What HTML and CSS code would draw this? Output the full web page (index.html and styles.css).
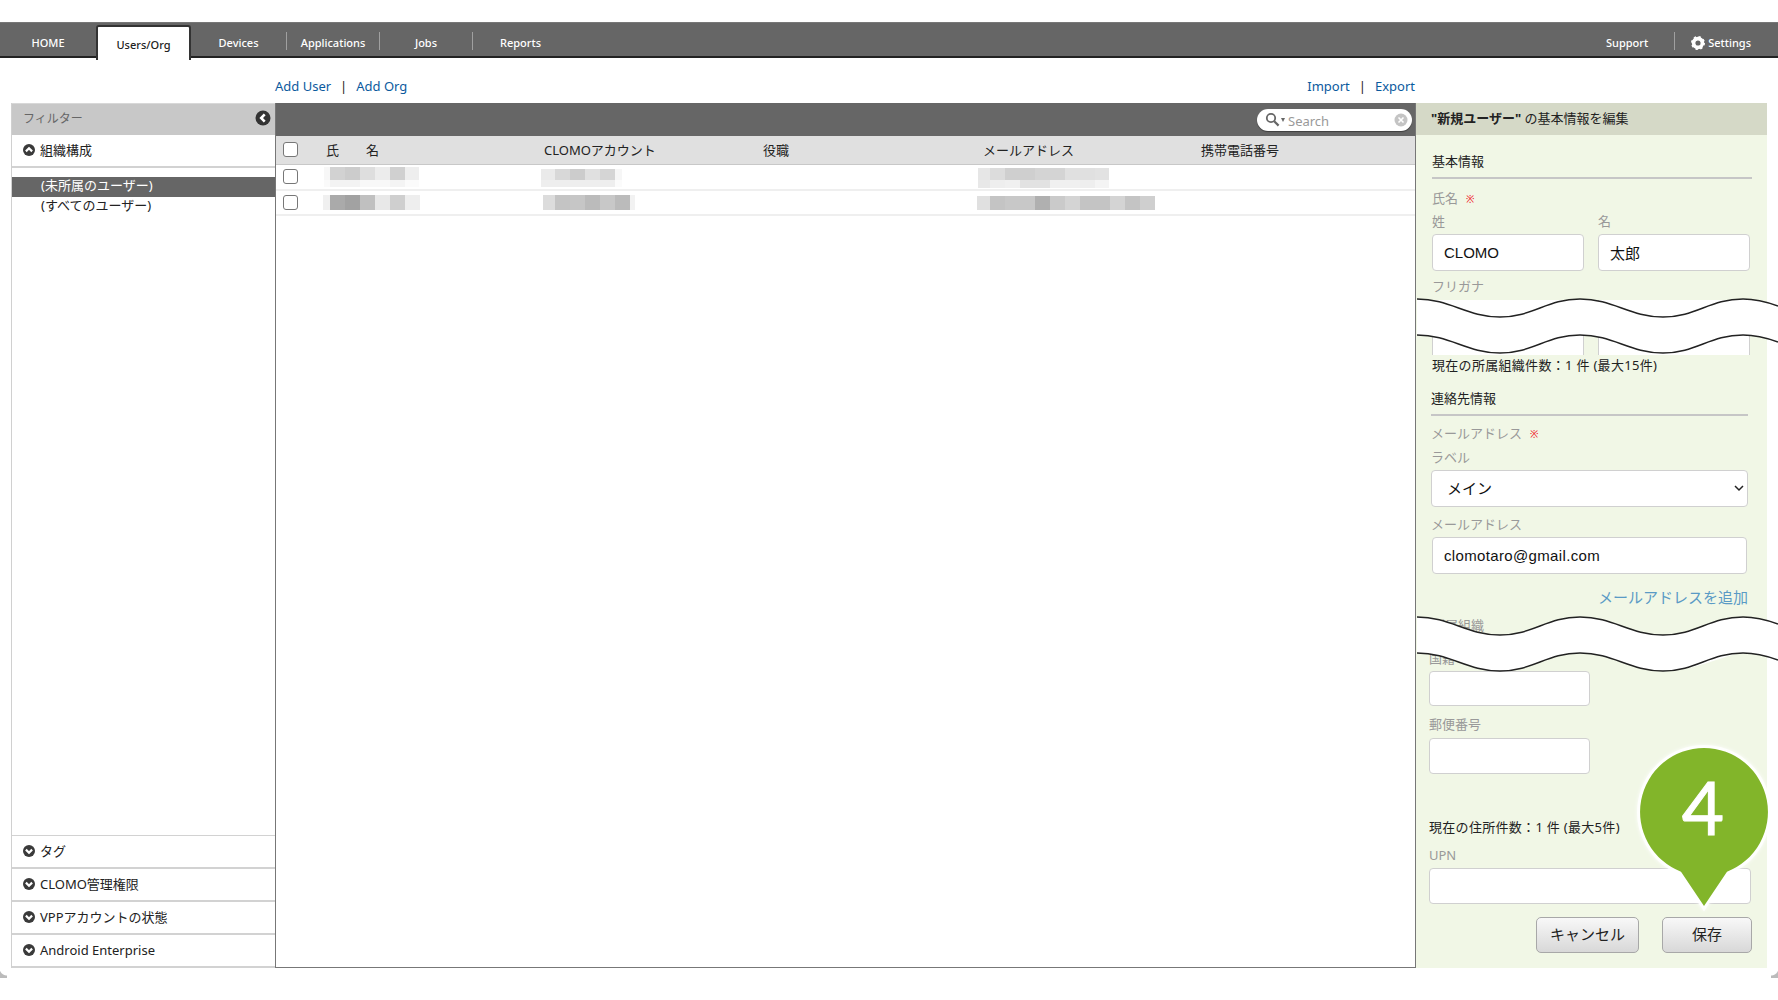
FILE: index.html
```html
<!DOCTYPE html>
<html lang="ja">
<head>
    <meta charset="UTF-8">
    <meta name="viewport" content="width=device-width, initial-scale=1.0">
    <title>Users/Org</title>
    <link rel="stylesheet" href="styles.css">
</head>
<body>
    <svg class="icon-defs" width="0" height="0">
        <defs>
            <symbol id="chev-down" viewBox="0 0 14 14">
                <circle cx="7" cy="7" r="6" fill="#3a3a3a"/>
                <path d="M3.9 5.6 7 8.7l3.1-3.1" fill="none" stroke="#fff" stroke-width="2.2"/>
            </symbol>
            <symbol id="chev-up" viewBox="0 0 14 14">
                <circle cx="7" cy="7" r="6" fill="#3a3a3a"/>
                <path d="M3.9 8.4 7 5.3l3.1 3.1" fill="none" stroke="#fff" stroke-width="2.2"/>
            </symbol>
        </defs>
    </svg>

    <nav class="nav">
        <a class="nav-item home">HOME</a>
        <a class="nav-item active">Users/Org</a>
        <a class="nav-item">Devices</a>
        <span class="nav-sep"></span>
        <a class="nav-item narrow">Applications</a>
        <span class="nav-sep"></span>
        <a class="nav-item narrow">Jobs</a>
        <span class="nav-sep"></span>
        <a class="nav-item">Reports</a>
        <a class="nav-support">Support</a>
        <span class="nav-sep"></span>
        <a class="nav-settings">
            <svg width="14" height="14" viewBox="0 0 14 14">
                <circle cx="7" cy="7" r="4.4" fill="none" stroke="#fff" stroke-width="3.6"/>
                <circle cx="7" cy="7" r="5" fill="none" stroke="#fff" stroke-width="4" stroke-dasharray="1.9 2"/>
            </svg>
            Settings
        </a>
    </nav>

    <div class="toolbar">
        <div class="toolbar-links">
            <a>Add User</a><span class="bar">|</span><a>Add Org</a>
        </div>
        <div class="toolbar-links">
            <a>Import</a><span class="bar">|</span><a>Export</a>
        </div>
    </div>

    <main class="main">
        <aside class="filter">
            <div class="filter-head">
                <span>フィルター</span>
                <svg class="collapse" width="16" height="16" viewBox="0 0 16 16">
                    <circle cx="8" cy="8" r="7.5" fill="#333"/>
                    <path d="M9.7 4.4 6.2 8l3.5 3.6" fill="none" stroke="#fff" stroke-width="2.6"/>
                </svg>
            </div>
            <div class="filter-row open">
                <svg width="14" height="14"><use href="#chev-up"/></svg>組織構成
            </div>
            <ul class="org-list">
                <li class="selected">(未所属のユーザー)</li>
                <li>(すべてのユーザー)</li>
            </ul>
            <div class="filter-row">
                <svg width="14" height="14"><use href="#chev-down"/></svg>タグ
            </div>
            <div class="filter-row">
                <svg width="14" height="14"><use href="#chev-down"/></svg>CLOMO管理権限
            </div>
            <div class="filter-row">
                <svg width="14" height="14"><use href="#chev-down"/></svg>VPPアカウントの状態
            </div>
            <div class="filter-row">
                <svg width="14" height="14"><use href="#chev-down"/></svg>Android Enterprise
            </div>
        </aside>

        <section class="list">
            <div class="list-head">
                <div class="search">
                    <svg width="15" height="15" viewBox="0 0 15 15">
                        <circle cx="6" cy="6" r="4.2" fill="none" stroke="#666" stroke-width="1.8"/>
                        <path d="m9.2 9.2 4.4 4.4" stroke="#666" stroke-width="2.2"/>
                    </svg>
                    <span class="search-caret"></span>
                    <span class="search-text">Search</span>
                    <svg class="search-clear" width="14" height="14" viewBox="0 0 14 14">
                        <circle cx="7" cy="7" r="6.5" fill="#c4c4c4"/>
                        <path d="m4.5 4.5 5 5m0-5-5 5" stroke="#fff" stroke-width="1.6"/>
                    </svg>
                </div>
            </div>
            <table class="users">
                <colgroup>
                    <col class="col-check">
                    <col class="col-name">
                    <col class="col-account">
                    <col class="col-title">
                    <col class="col-mail">
                    <col>
                </colgroup>
                <thead>
                    <tr>
                        <th><input type="checkbox"></th>
                        <th>氏<span class="name-gap"></span>名</th>
                        <th>CLOMOアカウント</th>
                        <th>役職</th>
                        <th>メールアドレス</th>
                        <th>携帯電話番号</th>
                    </tr>
                </thead>
                <tbody>
                    <tr class="row-one">
                        <td><input type="checkbox"></td>
                        <td><div class="name-a"></div></td>
                        <td><div class="account-a"></div></td>
                        <td></td>
                        <td><div class="mail-a"></div></td>
                        <td></td>
                    </tr>
                    <tr class="row-two">
                        <td><input type="checkbox"></td>
                        <td><div class="name-b"></div></td>
                        <td><div class="account-b"></div></td>
                        <td></td>
                        <td><div class="mail-b"></div></td>
                        <td></td>
                    </tr>
                </tbody>
            </table>
        </section>

        <aside class="editor">
            <div class="editor-head"><b>"新規ユーザー"</b> の基本情報を編集</div>

            <div class="part-upper">
                <h2 class="section-title first">基本情報</h2>
                <div class="label name-label">氏名<span class="req">※</span></div>
                <div class="name-grid">
                    <div>
                        <div class="label sub">姓</div>
                        <input class="text-input" type="text" value="CLOMO">
                    </div>
                    <div>
                        <div class="label sub">名</div>
                        <input class="text-input" type="text" value="太郎">
                    </div>
                </div>
                <div class="label kana">フリガナ</div>
                <div class="name-grid cut">
                    <div class="cut-input"></div>
                    <div class="cut-input"></div>
                </div>
                <div class="count first-count">現在の所属組織件数：1 件 (最大15件)</div>
                <h2 class="section-title contact">連絡先情報</h2>
                <div class="label mail-label">メールアドレス<span class="req">※</span></div>
                <div class="label sub-label">ラベル</div>
                <div class="select-wrap">
                    <select class="select-input"><option>メイン</option></select>
                    <svg class="select-chevron" width="10" height="7" viewBox="0 0 10 7">
                        <path d="m1 1 4 4 4-4" fill="none" stroke="#222" stroke-width="1.5"/>
                    </svg>
                </div>
                <div class="label sub-label after-select">メールアドレス</div>
                <input class="text-input mail-input" type="text" value="clomotaro@gmail.com">
                <div class="add-mail"><a>メールアドレスを追加</a></div>
                <div class="label org-label">所属組織</div>
            </div>

            <div class="part-lower">
                <div class="label country">国籍</div>
                <input class="text-input short" type="text">
                <div class="label postal">郵便番号</div>
                <input class="text-input short postal-input" type="text">
                <div class="count second-count">現在の住所件数：1 件 (最大5件)</div>
                <div class="label upn">UPN</div>
                <input class="text-input upn-input" type="text">
                <div class="buttons">
                    <button class="btn cancel">キャンセル</button>
                    <button class="btn save">保存</button>
                </div>
            </div>

            <svg class="wave wave-one" width="361" height="58" viewBox="0 0 361 58">
                <path class="wave-fill" d="M0 1C33 1 50 19 83 19S130 1 163 1 213 19 246 19 293 1 326 1C340 1 350 4 361 8L361 44C350 40 340 37 326 37S279 55 246 55 196 37 163 37 116 55 83 55 33 37 0 37Z"/>
                <path class="wave-line" d="M0 1C33 1 50 19 83 19S130 1 163 1 213 19 246 19 293 1 326 1C340 1 350 4 361 8"/>
                <path class="wave-line" d="M0 37C33 37 50 55 83 55S130 37 163 37 213 55 246 55 293 37 326 37C340 37 350 40 361 44"/>
            </svg>
            <svg class="wave wave-two" width="361" height="58" viewBox="0 0 361 58">
                <path class="wave-fill" d="M0 1C33 1 50 19 83 19S130 1 163 1 213 19 246 19 293 1 326 1C340 1 350 4 361 8L361 44C350 40 340 37 326 37S279 55 246 55 196 37 163 37 116 55 83 55 33 37 0 37Z"/>
                <path class="wave-line" d="M0 1C33 1 50 19 83 19S130 1 163 1 213 19 246 19 293 1 326 1C340 1 350 4 361 8"/>
                <path class="wave-line" d="M0 37C33 37 50 55 83 55S130 37 163 37 213 55 246 55 293 37 326 37C340 37 350 40 361 44"/>
            </svg>

            <svg class="pin" width="140" height="165" viewBox="0 0 140 165">
                <path class="pin-glow" d="M70 4a64 64 0 0 1 23 123.700L70 162 47 127.700A64 64 0 0 1 70 4Z"/>
                <path class="pin-body" d="M70 4a64 64 0 0 1 23 123.700L70 162 47 127.700A64 64 0 0 1 70 4Z"/>
                <text class="pin-number" x="69" y="91">4</text>
            </svg>
        </aside>
    </main>

    <div class="corner corner-left"></div>
    <div class="corner corner-right"></div>
</body>
</html>
```

FILE: styles.css
```css
* {
    box-sizing: border-box;
}
html, body {
    height: 100%;
}
body {
    margin: 0;
    padding-top: 22px;
    position: relative;
    overflow: hidden;
    background-color: #fff;
    color: #222;
    font-family: "Noto Sans", "Noto Sans CJK JP", sans-serif;
    font-size: 13px;
}
.icon-defs {
    position: absolute;
}
a {
    text-decoration: none;
}

/* top nav */
.nav {
    display: flex;
    align-items: center;
    height: 36px;
    padding: 6px 27px 0 0;
    background-color: #666;
    border-top: 1px solid #777;
    border-bottom: 2px solid #222;
    color: #fff;
    font-size: 11px;
    font-weight: 500;
}
.nav-item {
    width: 95px;
    text-align: center;
}
.nav-item.home {
    width: 96px;
}
.nav-item.narrow {
    width: 92px;
}
.nav-item.active {
    align-self: flex-start;
    height: 35px;
    margin-top: -4px;
    padding-top: 10px;
    background-color: #fff;
    border: 2px solid #333;
    border-bottom: 0;
    border-radius: 3px 3px 0 0;
    color: #222;
}
.nav-sep {
    width: 1px;
    height: 18px;
    margin-top: -4px;
    background-color: #a0a0a0;
}
.nav-support {
    margin-left: auto;
    margin-right: 26px;
}
.nav-settings {
    display: flex;
    align-items: center;
    gap: 3px;
    margin-left: 16px;
}

/* add / import links */
.toolbar {
    display: flex;
    justify-content: space-between;
    align-items: center;
    height: 45px;
    padding: 11px 363px 0 275px;
    font-size: 13px;
}
.toolbar-links a {
    color: #0b5a9e;
}
.toolbar-links .bar {
    margin: 0 9px;
    color: #222;
}

.main {
    display: flex;
    width: 1756px;
    height: 865px;
    margin-left: 11px;
}

/* filter column */
.filter {
    display: flex;
    flex-direction: column;
    flex: none;
    width: 264px;
    border-left: 1px solid #d0d0d0;
}
.filter-head {
    display: flex;
    justify-content: space-between;
    align-items: center;
    height: 32px;
    padding: 0 4px 3px 11px;
    background-color: #c8c8c8;
    border-top: 1px solid #d8d8d8;
    color: #666;
    font-size: 12px;
}
.filter-row {
    display: flex;
    align-items: center;
    gap: 4px;
    height: 33px;
    padding: 0 0 2px 10px;
    border-bottom: 2px solid #d2d2d2;
    font-size: 13px;
}
.filter-row svg {
    flex: none;
}
.org-list {
    flex: 1;
    list-style: none;
    margin: 0;
    padding: 9px 0 0;
    border-bottom: 1px solid #d2d2d2;
}
.org-list li {
    height: 20px;
    padding: 0 0 2px 29px;
    line-height: 16px;
}
.org-list li.selected {
    background-color: #666;
    color: #fff;
}

/* user list */
.list {
    flex: 1;
    min-width: 0;
    border-left: 1px solid #777;
    border-right: 1px solid #777;
    border-bottom: 1px solid #777;
}
.list-head {
    display: flex;
    justify-content: flex-end;
    align-items: center;
    height: 33px;
    padding: 0 3px 0 0;
    background-color: #666;
}
.search {
    display: flex;
    align-items: center;
    width: 155px;
    height: 22px;
    padding: 0 4px 0 8px;
    background-color: #fff;
    border-radius: 11px;
    box-shadow: 0 1px 1px rgba(0, 0, 0, 0.4);
}
.search-caret {
    width: 0;
    height: 0;
    margin: 1px 3px 0 1px;
    border-left: 2.500px solid transparent;
    border-right: 2.500px solid transparent;
    border-top: 4px solid #666;
}
.search-text {
    flex: 1;
    color: #999;
    font-size: 13px;
    padding-top: 2px;
}
.users {
    width: 100%;
    table-layout: fixed;
    border-collapse: separate;
    border-spacing: 0;
}
.col-check {
    width: 50px;
}
.col-name {
    width: 218px;
}
.col-account {
    width: 219px;
}
.col-title {
    width: 220px;
}
.col-mail {
    width: 218px;
}
.users th {
    height: 29px;
    padding: 0 0 2px;
    background-color: #e0e0e0;
    border-bottom: 1px solid #c8c8c8;
    font-weight: normal;
    font-size: 13px;
    text-align: left;
}
.users td {
    padding: 0;
    vertical-align: top;
    border-bottom: 2px solid #efefef;
}
.row-one {
    height: 26px;
}
.row-two {
    height: 25px;
}
.users input[type="checkbox"] {
    display: block;
    width: 15px;
    height: 15px;
    margin: 0 0 0 7px;
    appearance: none;
    background-color: #fff;
    border: 1px solid #777;
    border-radius: 3px;
}
.users td input[type="checkbox"] {
    margin-top: 4px;
}
.name-gap {
    display: inline-block;
    width: 27px;
}

/* pixelated names and addresses */
.name-a {
    width: 95px;
    height: 20px;
    margin: 2px 0 0 -2px;
    background:
        linear-gradient(90deg, #fafafa 0 6px, #f3f3f3 0 36px, #f8f8f8 0 66px, #f4f4f4 0 81px, #fbfbfb 0) 0 13px / 100% 7px no-repeat,
        linear-gradient(90deg, #f7f7f7 0 6px, #d2d2d2 0 21px, #ccc 0 36px, #dedede 0 51px, #ececec 0 66px, #d0d0d0 0 81px, #eee 0) 0 0 / 100% 13px no-repeat;
}
.name-b {
    width: 97px;
    height: 15px;
    margin: 4px 0 0 -3px;
    background: linear-gradient(90deg, #f0f0f0 0 7px, #aaa 0 22px, #a2a2a2 0 37px, #c0c0c0 0 52px, #e8e8e8 0 67px, #cfcfcf 0 82px, #eee 0);
}
.account-a {
    width: 81px;
    height: 18px;
    margin: 4px 0 0 -3px;
    background:
        linear-gradient(90deg, #eee 0 74px, #fbfbfb 0) 0 11px / 100% 7px no-repeat,
        linear-gradient(90deg, #eaeaea 0 14px, #d8d8d8 0 29px, #ccc 0 44px, #e0e0e0 0 59px, #d5d5d5 0 74px, #f6f6f6 0) 0 0 / 100% 11px no-repeat;
}
.account-b {
    width: 92px;
    height: 15px;
    margin: 4px 0 0 -1px;
    background: linear-gradient(90deg, #dcdcdc 0 12px, #c4c4c4 0 27px, #c6c6c6 0 42px, #bbb 0 57px, #c8c8c8 0 72px, #bbb 0 87px, #f2f2f2 0);
}
.mail-a {
    width: 131px;
    height: 20px;
    margin: 3px 0 0 -5px;
    background:
        linear-gradient(90deg, #e8e8e8 0 12px, #eee 0 27px, #f0f0f0 0 42px, #e2e2e2 0 72px, #f0f0f0 0 102px, #eee 0 117px, #f4f4f4 0) 0 12px / 100% 8px no-repeat,
        linear-gradient(90deg, #e6e6e6 0 12px, #dcdcdc 0 27px, #cfcfcf 0 57px, #d4d4d4 0 87px, #e0e0e0 0 117px, #e2e2e2 0) 0 0 / 100% 12px no-repeat;
}
.mail-b {
    width: 178px;
    height: 14px;
    margin: 5px 0 0 -6px;
    background: linear-gradient(90deg, #e0e0e0 0 13px, #c4c4c4 0 28px, #c8c8c8 0 58px, #b0b0b0 0 73px, #cacaca 0 88px, #d4d4d4 0 103px, #c4c4c4 0 133px, #d4d4d4 0 148px, #c4c4c4 0 163px, #cfcfcf 0);
}

/* edit panel */
.editor {
    position: relative;
    flex: none;
    width: 351px;
    background-color: #f1f7e6;
    color: #222;
}
.editor-head {
    height: 32px;
    padding-left: 15px;
    background-color: #d5d9c7;
    font-size: 13px;
    line-height: 30px;
}
.part-upper {
    padding: 0 16px;
}
.part-lower {
    padding: 0 16px 0 13px;
}
.section-title {
    margin: 13px 0 0;
    padding-bottom: 5px;
    border-bottom: 2px solid #c6c6c6;
    font-weight: normal;
    font-size: 13px;
    line-height: 18px;
    height: 27px;
}
.section-title.first {
    margin-top: 17px;
    margin-right: -1px;
}
.section-title.contact {
    margin-left: -1px;
    margin-right: 3px;
}
.label {
    height: 18px;
    color: #999;
    font-size: 13px;
    line-height: 16px;
}
.req {
    margin-left: 8px;
    color: #f01020;
    font-size: 10px;
}
.name-label {
    margin-top: 11px;
}
.name-grid {
    display: grid;
    grid-template-columns: 152px 152px;
    column-gap: 14px;
    margin-top: 5px;
}
.label.sub {
    margin-bottom: 3px;
}
.text-input {
    display: block;
    width: 100%;
    height: 37px;
    padding: 0 11px;
    background-color: #fff;
    border: 1px solid #d0d0d0;
    border-radius: 4px;
    color: #111;
    font-family: "Liberation Sans", "Noto Sans CJK JP", sans-serif;
    font-size: 15px;
}
.kana {
    margin-top: 7px;
}
.name-grid.cut {
    margin-top: 4px;
}
.cut-input {
    height: 55px;
    background-color: #fff;
    border-left: 1px solid #d0d0d0;
    border-right: 1px solid #d0d0d0;
}
.count {
    height: 20px;
    font-size: 13px;
    line-height: 18px;
    letter-spacing: 0.3px;
}
.first-count {
    margin-top: 1px;
}
.mail-label {
    margin-top: 9px;
    margin-left: -1px;
}
.sub-label {
    margin-top: 6px;
    margin-left: -1px;
}
.after-select {
    margin-top: 9px;
}
.select-wrap {
    position: relative;
    width: 317px;
    margin: 3px 0 0 -1px;
}
.select-input {
    display: block;
    width: 100%;
    height: 37px;
    padding: 0 15px 2px;
    appearance: none;
    background-color: #fff;
    border: 1px solid #d0d0d0;
    border-radius: 4px;
    color: #111;
    font-family: "Noto Sans CJK JP", sans-serif;
    font-size: 15px;
}
.select-chevron {
    position: absolute;
    top: 15px;
    right: 4px;
}
.mail-input {
    width: 315px;
    margin-top: 3px;
    letter-spacing: 0.35px;
}
.add-mail {
    width: 316px;
    height: 20px;
    margin-top: 15px;
    text-align: right;
    font-size: 15px;
    line-height: 17px;
}
.add-mail a {
    color: #5a9ac5;
}
.org-label {
    margin-top: 8px;
}
.country {
    margin-top: 15px;
}
.text-input.short {
    width: 161px;
    height: 35px;
    margin-top: 3px;
}
.postal {
    margin-top: 10px;
}
.text-input.postal-input {
    height: 36px;
    margin-top: 4px;
}
.second-count {
    margin-top: 44px;
}
.upn {
    margin-top: 9px;
}
.upn-input {
    width: 322px;
    height: 36px;
    margin-top: 3px;
}
.buttons {
    display: flex;
    justify-content: flex-end;
    gap: 23px;
    margin-top: 13px;
    margin-right: -1px;
}
.btn {
    height: 36px;
    padding: 0 0 4px;
    background: linear-gradient(#f8f8f8, #d8d8d8);
    border: 1px solid #a8a8a8;
    border-radius: 5px;
    color: #222;
    font-family: "Noto Sans CJK JP", sans-serif;
    font-size: 15px;
}
.btn.cancel {
    width: 103px;
}
.btn.save {
    width: 90px;
}

/* break marks across the form */
.wave {
    position: absolute;
    left: 1px;
    overflow: visible;
}
.wave-one {
    top: 195px;
}
.wave-two {
    top: 513px;
}
.wave-fill {
    fill: #fff;
}
.wave-line {
    fill: none;
    stroke: #222;
    stroke-width: 1.500;
}

/* step marker */
.pin {
    position: absolute;
    left: 218px;
    top: 641px;
    overflow: visible;
    filter: drop-shadow(0 0 2px #fff);
}
.pin-glow {
    fill: #fff;
    stroke: #fff;
    stroke-width: 6;
    opacity: 0.8;
}
.pin-body {
    fill: #82b52a;
}
.pin-number {
    fill: #fff;
    stroke: #fff;
    stroke-width: 1;
    font-family: Lato, sans-serif;
    font-size: 73px;
    text-anchor: middle;
}

/* window corners */
.corner {
    position: absolute;
    top: 968px;
    width: 7px;
    height: 10px;
}
.corner-left {
    left: 0;
    background: radial-gradient(circle at 100% 0, transparent 7px, #bbb 8px);
}
.corner-right {
    right: 0;
    background: radial-gradient(circle at 0 0, transparent 7px, #bbb 8px);
}
```
